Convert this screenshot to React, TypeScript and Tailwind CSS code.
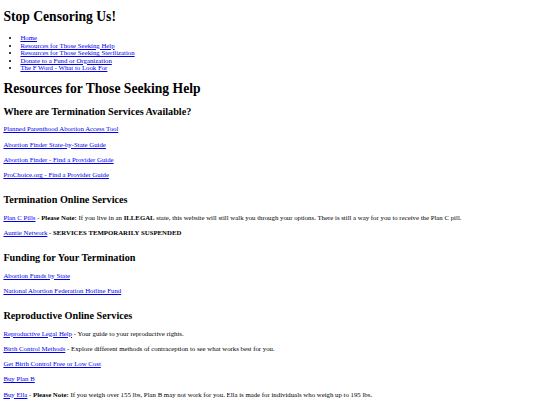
import React from "react";

const navLinks = [
  "Home",
  "Resources for Those Seeking Help",
  "Resources for Those Seeking Sterilization",
  "Donate to a Fund or Organization",
  "The F Word - What to Look For",
];

function A({ children }: { children: React.ReactNode }) {
  return (
    <a href="#" className="text-[#0000ee] underline">
      {children}
    </a>
  );
}

function H1({ children }: { children: React.ReactNode }) {
  return <h1 className="text-[13.6px] font-bold leading-[normal] my-[9.1px]">{children}</h1>;
}

function H2({ children, first }: { children: React.ReactNode; first?: boolean }) {
  return (
    <h2 className={`text-[10.2px] font-bold leading-[normal] mb-[8.6px] ${first ? "mt-[9px]" : "mt-[15.7px]"}`}>
      {children}
    </h2>
  );
}

function P({ children }: { children: React.ReactNode }) {
  return <p className="my-[7.7px] leading-[7.5px]">{children}</p>;
}

export default function App() {
  return (
    <div className="min-h-screen bg-white text-black font-['Liberation_Serif',serif] text-[6.8px] leading-[normal] px-[3.4px] flow-root">
      <H1>Stop Censoring Us!</H1>
      <ul className="list-disc pl-[17px] my-[6.8px] leading-[7.5px]">
        {navLinks.map((l) => (
          <li key={l}>
            <A>{l}</A>
          </li>
        ))}
      </ul>

      <H1>Resources for Those Seeking Help</H1>

      <H2 first>Where are Termination Services Available?</H2>
      <P><A>Planned Parenthood Abortion Access Tool</A></P>
      <P><A>Abortion Finder State-by-State Guide</A></P>
      <P><A>Abortion Finder - Find a Provider Guide</A></P>
      <P><A>ProChoice.org - Find a Provider Guide</A></P>

      <H2>Termination Online Services</H2>
      <P>
        <A>Plan C Pills</A> - <b>Please Note:</b> If you live in an <b>ILLEGAL</b> state, this website will still walk you through your options. There is still a way for you to receive the Plan C pill.
      </P>
      <P>
        <A>Auntie Network</A> - <b>SERVICES TEMPORARILY SUSPENDED</b>
      </P>

      <H2>Funding for Your Termination</H2>
      <P><A>Abortion Funds by State</A></P>
      <P><A>National Abortion Federation Hotline Fund</A></P>

      <H2>Reproductive Online Services</H2>
      <P>
        <A>Reproductive Legal Help</A> - Your guide to your reproductive rights.
      </P>
      <P>
        <A>Birth Control Methods</A> - Explore different methods of contraception to see what works best for you.
      </P>
      <P><A>Get Birth Control Free or Low Cost</A></P>
      <P><A>Buy Plan B</A></P>
      <P>
        <A>Buy Ella</A> - <b>Please Note:</b> If you weigh over 155 lbs, Plan B may not work for you. Ella is made for individuals who weigh up to 195 lbs.
      </P>
    </div>
  );
}
